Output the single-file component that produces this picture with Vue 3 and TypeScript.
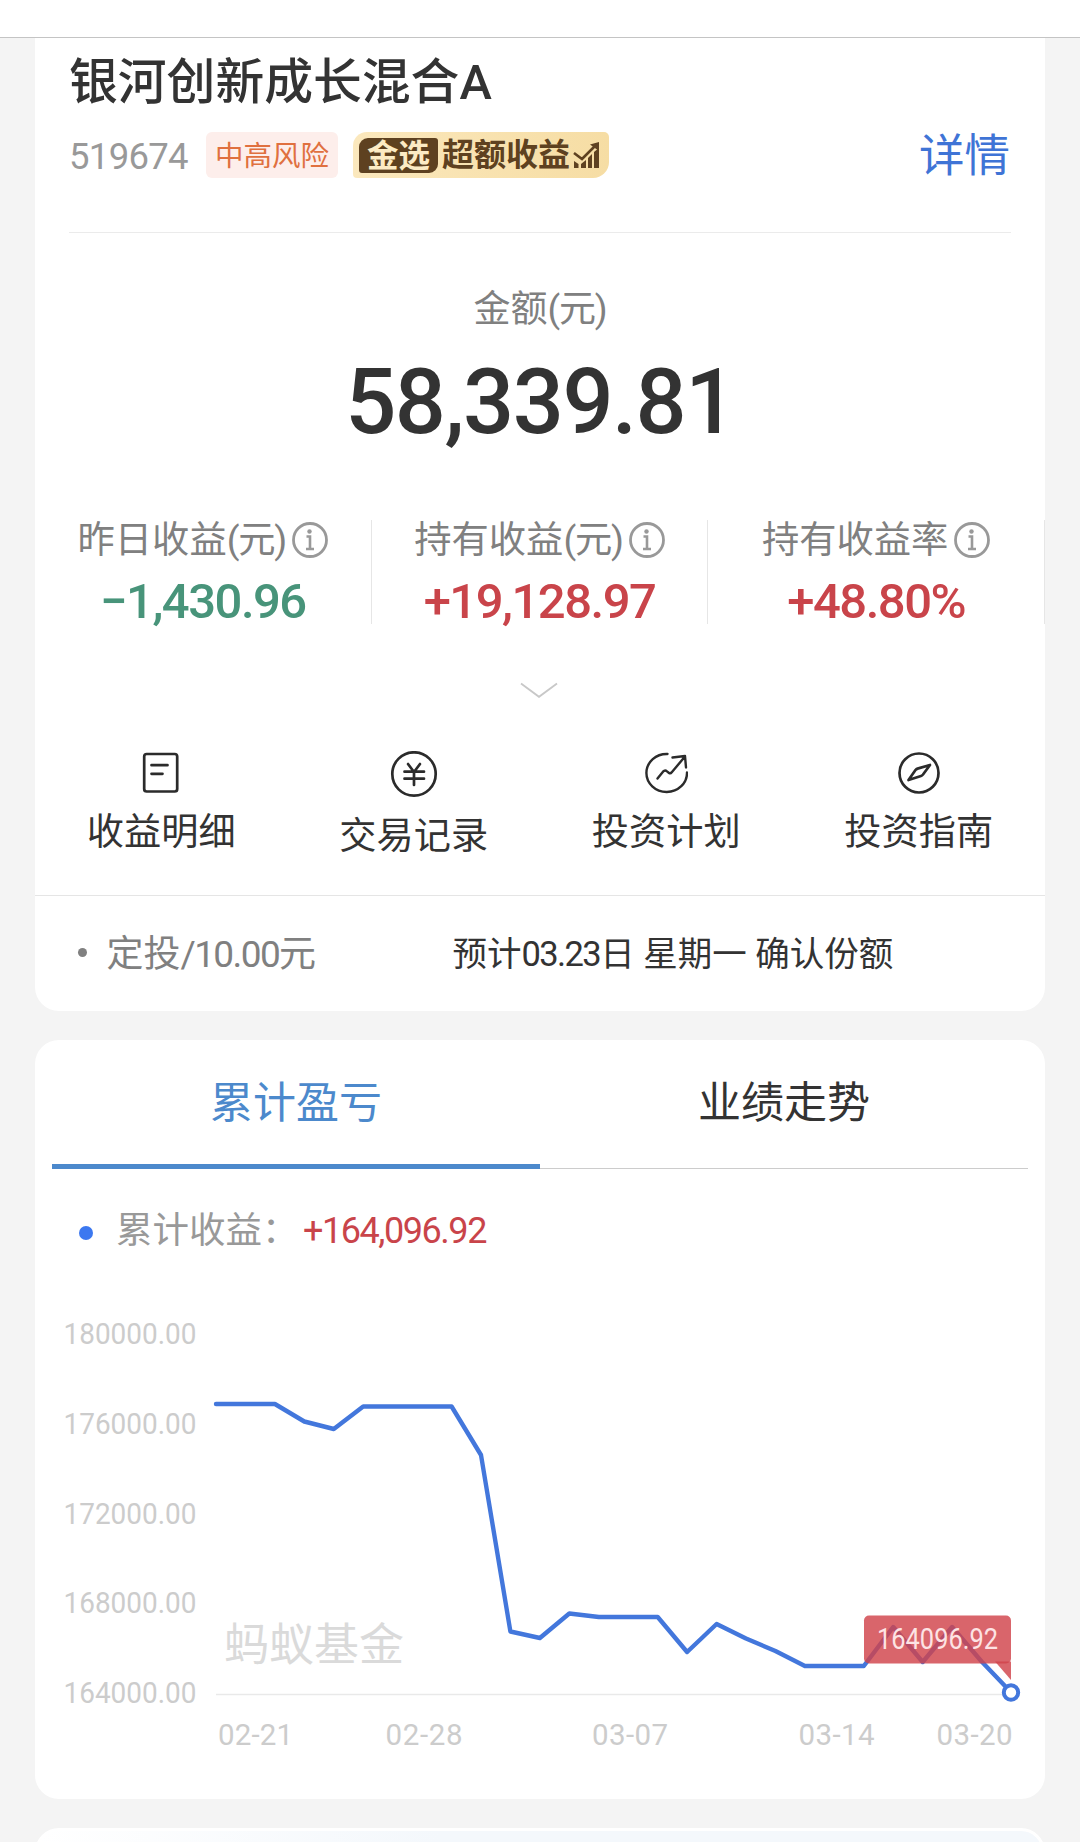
<script setup lang="ts">
interface Stat {
  label: string
  unit: string
  value: string
  tone: 'up' | 'down'
}

const stats: Stat[] = [
  { label: '昨日收益', unit: '(元)', value: '−1,430.96', tone: 'down' },
  { label: '持有收益', unit: '(元)', value: '+19,128.97', tone: 'up' },
  { label: '持有收益率', unit: '', value: '+48.80%', tone: 'up' },
]

const actions = [
  { icon: 'detail', label: '收益明细' },
  { icon: 'yuan', label: '交易记录' },
  { icon: 'plan', label: '投资计划' },
  { icon: 'guide', label: '投资指南' },
]

const series: number[] = [
  176947, 176947, 176947, 176167, 175833, 176836, 176836, 176836, 176836, 174674,
  166808, 166518, 167610, 167454, 167454, 167454, 165894, 167142, 166496, 165939,
  165270, 165270, 165270, 167008, 165448, 167008, 165470, 164096.92,
]

const plot = { left: 181, right: 976, base: 437.5, perTick: 89.75, min: 164000, tick: 4000 }

const px = (i: number) => plot.left + ((plot.right - plot.left) * i) / (series.length - 1)
const py = (v: number) => plot.base - ((v - plot.min) / plot.tick) * plot.perTick
const line = series.map((v, i) => `${px(i).toFixed(1)},${py(v).toFixed(1)}`).join(' ')

const yTicks = [180000, 176000, 172000, 168000, 164000].map((v) => ({
  text: v.toFixed(2),
  y: py(v) + 8.5,
}))

const xTicks = [
  { text: '02-21', x: 183, w: 75 },
  { text: '02-28', x: 350.5, w: 77 },
  { text: '03-07', x: 557, w: 76 },
  { text: '03-14', x: 763.5, w: 76 },
  { text: '03-20', x: 901.5, w: 76 },
]
</script>

<template>
  <div class="page">
    <header class="topbar"></header>

    <section class="card fund">
      <h1 class="name">银河创新成长混合A</h1>
      <div class="meta">
        <span class="code">519674</span>
        <span class="risk">中高风险</span>
        <span class="gold">
          <span class="gold-pick">金选</span>
          <span class="gold-text">超额收益</span>
          <svg class="gold-icon" width="28" height="28" viewBox="0 0 28 28">
            <path d="M1 12L9 18L22 5" fill="none" stroke="#5e4120" stroke-width="2.6" />
            <path d="M17 3.5L26 1V10Z" fill="#5e4120" />
            <path d="M1 20L5.500 23V27H1ZM8 23L13 19V27H8ZM15 17L19 13V27H15ZM21 11L26 7V27H21Z" fill="#5e4120" />
          </svg>
        </span>
        <a class="more">详情</a>
      </div>
      <div class="rule"></div>

      <div class="amount-label">金额<span class="unit">(元)</span></div>
      <div class="amount">58,339.81</div>

      <div class="stats">
        <div v-for="s in stats" :key="s.label" class="stat">
          <div class="stat-label">
            <span>{{ s.label }}<span class="unit">{{ s.unit }}</span></span>
            <svg width="36" height="36" viewBox="0 0 36 36" fill="none" stroke="#999">
              <circle cx="18" cy="18" r="16.500" stroke-width="2.800" />
              <circle cx="17.500" cy="9.500" r="2.200" fill="#999" stroke="none" />
              <path d="M14.500 14.500H18V27M14 27H22" stroke-width="2.600" />
            </svg>
          </div>
          <div class="stat-value" :class="s.tone">{{ s.value }}</div>
        </div>
      </div>

      <svg class="chevron" width="40" height="16" viewBox="0 0 40 16">
        <path d="M1 1.500L19 14.800L37 1.500" fill="none" stroke="#c8c8c8" stroke-width="1.800" />
      </svg>

      <nav class="actions">
        <div v-for="a in actions" :key="a.icon" class="action">
          <svg v-if="a.icon === 'detail'" width="44" height="44" viewBox="0 0 44 44" class="ico">
            <rect x="5.200" y="3" width="33" height="37.500" rx="2.500" />
            <path d="M12.500 14.200H28.500M12.500 22.800H23.500" />
          </svg>
          <svg v-else-if="a.icon === 'yuan'" width="48" height="48" viewBox="0 0 48 48" class="ico">
            <circle cx="24" cy="23" r="21.700" />
            <path d="M18 13L24 21L30 13M14.500 20.700H34M14.500 27.700H34M24 21V34" />
          </svg>
          <svg v-else-if="a.icon === 'plan'" width="44" height="44" viewBox="0 0 44 44" class="ico thin">
            <path d="M23.500 3A20.300 19 0 1 0 43 21.500" />
            <path d="M13.500 27.500L19 20.700Q21 18.600 23 20.400L25 22Q26.500 23 28 21L41 5.500M28.500 6.500L41 5L42 16.500" />
          </svg>
          <svg v-else width="44" height="44" viewBox="0 0 44 44" class="ico">
            <circle cx="22" cy="22" r="19.500" />
            <path d="M11.500 29L18.500 19Q19.300 18 20.500 17.600L33 14L26 23.500Q25 24.700 24 25Z" />
          </svg>
          <span class="action-label">{{ a.label }}</span>
        </div>
      </nav>

      <div class="plan">
        <i class="plan-dot"></i>
        <span class="plan-name">定投<span class="num">/10.00</span>元</span>
        <span class="plan-note">预计<span class="num">03.23</span>日 星期一 确认份额</span>
      </div>
    </section>

    <section class="card profit">
      <div class="tabs">
        <div class="tab active">累计盈亏</div>
        <div class="tab">业绩走势</div>
      </div>
      <div class="legend">
        <i class="legend-dot"></i>
        <span class="legend-name">累计收益：</span>
        <span class="legend-value">+164,096.92</span>
      </div>
      <svg class="chart" width="1010" height="542" viewBox="0 0 1010 542">
        <text
          v-for="t in yTicks"
          :key="t.text"
          class="tick"
          x="28.5"
          :y="t.y"
          textLength="133"
          lengthAdjust="spacingAndGlyphs"
        >{{ t.text }}</text>
        <text class="mark" x="189" y="403.500">蚂蚁基金</text>
        <path :d="`M${plot.left} ${plot.base}H${plot.right}`" stroke="#e9e9e9" stroke-width="1.300" />
        <text
          v-for="t in xTicks"
          :key="t.text"
          class="tick"
          :x="t.x"
          y="487.5"
          :textLength="t.w"
        >{{ t.text }}</text>
        <polyline
          :points="line"
          fill="none"
          stroke="#4377dc"
          stroke-width="4.400"
          stroke-linejoin="round"
          stroke-linecap="round"
        />
        <rect x="829" y="358.500" width="147" height="48" rx="5" fill="#d1434b" fill-opacity="0.820" />
        <path d="M960 404.500H976V423Z" fill="#d1434b" fill-opacity="0.820" />
        <text class="tip" x="842" y="391.5" textLength="121" lengthAdjust="spacingAndGlyphs">164096.92</text>
        <circle :cx="plot.right" cy="435.500" r="7.200" fill="#fff" stroke="#4377dc" stroke-width="4" />
      </svg>
    </section>

    <section class="next"></section>
  </div>
</template>

<style>
body {
  margin: 0;
  background: #f4f4f4;
}
</style>

<style scoped>
.page {
  width: 1080px;
  height: 1842px;
  overflow: hidden;
  background: #f4f4f4;
  color: #333;
  font-family: Roboto, "Noto Sans CJK SC", sans-serif;
}
.topbar {
  box-sizing: border-box;
  height: 38px;
  background: #fff;
  border-bottom: 1px solid #c4c4c4;
}
.card {
  width: 1010px;
  margin: 0 auto;
  background: #fff;
  overflow: hidden;
}
.fund {
  height: 973px;
  border-radius: 0 0 24px 24px;
}
.name {
  margin: 9px 34px 0;
  font-size: 48.800px;
  line-height: 71px;
  font-weight: 500;
}
.meta {
  display: flex;
  align-items: center;
  height: 46px;
  margin: 14px 34px 0;
}
.code {
  width: 137px;
  padding-top: 3px;
  font-size: 36.500px;
  letter-spacing: -0.700px;
  color: #999;
}
.risk {
  box-sizing: border-box;
  width: 132px;
  height: 46px;
  border-radius: 6px;
  background: #fdeeeb;
  color: #e0703f;
  font-size: 28.500px;
  line-height: 49px;
  text-align: center;
}
.gold {
  box-sizing: border-box;
  display: flex;
  align-items: center;
  width: 256px;
  height: 46px;
  margin-left: 15px;
  padding-left: 6px;
  border-radius: 14px 5px 16px 4px;
  background: linear-gradient(90deg, #fbe8bd, #f6dda4);
  color: #5e4120;
  font-weight: 700;
}
.gold-pick {
  width: 79px;
  height: 35px;
  border-radius: 9px 3px 9px 3px;
  background: #5e4120;
  color: #fcebc4;
  font-size: 31.500px;
  line-height: 37px;
  text-align: center;
}
.gold-text {
  margin-left: 4px;
  font-size: 32px;
  line-height: 48px;
}
.gold-icon {
  margin-left: 3px;
}
.more {
  margin-left: auto;
  padding: 4px 1px 0 0;
  font-size: 45.500px;
  line-height: 48px;
  color: #3f74d6;
}
.rule {
  height: 1px;
  margin: 54px 34px 0;
  background: #ebebeb;
}
.amount-label {
  margin-top: 52px;
  font-size: 37px;
  line-height: 50px;
  text-align: center;
  color: #808080;
}
.unit {
  letter-spacing: -1.200px;
}
.amount {
  margin-top: 18px;
  font-size: 90px;
  line-height: 100px;
  font-weight: 500;
  text-align: center;
  letter-spacing: -1.500px;
}
.stats {
  display: flex;
  height: 104px;
  margin-top: 67px;
}
.stat {
  box-sizing: border-box;
  flex: 1 1 0;
  border-right: 1px solid #e6e6e6;
  text-align: center;
}
.stat-label {
  display: flex;
  justify-content: center;
  height: 41px;
  font-size: 37.300px;
  line-height: 41px;
  color: #808080;
}
.stat-label svg {
  margin: 2px 0 0 6px;
}
.stat-value {
  margin-top: 17px;
  font-size: 49px;
  line-height: 47px;
  font-weight: 500;
  letter-spacing: -1.500px;
}
.up {
  color: #c9444a;
}
.down {
  color: #48947a;
}
.chevron {
  display: block;
  margin: 58px auto 0;
}
.actions {
  box-sizing: border-box;
  display: flex;
  height: 145px;
  margin-top: 53px;
  border-bottom: 1px solid #e5e5e5;
}
.action {
  display: flex;
  flex: 1 1 0;
  flex-direction: column;
  align-items: center;
}
.ico {
  fill: none;
  stroke: #2b2b2b;
  stroke-width: 2.700;
  stroke-linecap: round;
  stroke-linejoin: round;
}
.thin {
  stroke-width: 2.400;
}
.action-label {
  margin-top: 15px;
  font-size: 37.200px;
  line-height: 45px;
}
.plan {
  display: flex;
  align-items: center;
  height: 115px;
  line-height: 46px;
}
.num {
  letter-spacing: -1.600px;
}
.plan-dot {
  width: 9px;
  height: 9px;
  margin: -3px 20px 0 42.500px;
  border-radius: 50%;
  background: #808080;
}
.plan-name {
  width: 346px;
  padding-top: 3px;
  font-size: 37px;
  color: #808080;
}
.plan-note {
  font-size: 34.500px;
}
.profit {
  height: 759px;
  margin-top: 29px;
  border-radius: 24px;
}
.tabs {
  box-sizing: border-box;
  display: flex;
  height: 129px;
  margin: 0 17px;
  border-bottom: 1px solid #ccc;
}
.tab {
  box-sizing: border-box;
  flex: 1 1 0;
  height: 129px;
  font-size: 43px;
  line-height: 127px;
  text-align: center;
}
.tab.active {
  border-bottom: 5px solid #4c89cc;
  color: #4c89cc;
}
.legend {
  display: flex;
  align-items: center;
  height: 52px;
  margin-top: 36px;
  padding-left: 44px;
  font-size: 36.500px;
  line-height: 54px;
}
.legend-dot {
  width: 14px;
  height: 14px;
  margin: 3px 23px 0 0;
  border-radius: 50%;
  background: #3c78f0;
}
.legend-name {
  width: 187px;
  color: #999;
}
.legend-value {
  font-size: 36px;
  letter-spacing: -1.450px;
  color: #c9444a;
}
.chart {
  display: block;
}
.tick {
  font-size: 29.500px;
  fill: #ccc;
}
.mark {
  font-size: 45px;
  fill: #dadada;
}
.tip {
  font-size: 29.500px;
  fill: #fde3e4;
}
.next {
  box-sizing: border-box;
  width: 1010px;
  height: 60px;
  margin: 29px auto 0;
  border: 3px solid #fff;
  border-radius: 24px;
  background: linear-gradient(90deg, #fff, #f4f8fc 40%);
}
</style>
